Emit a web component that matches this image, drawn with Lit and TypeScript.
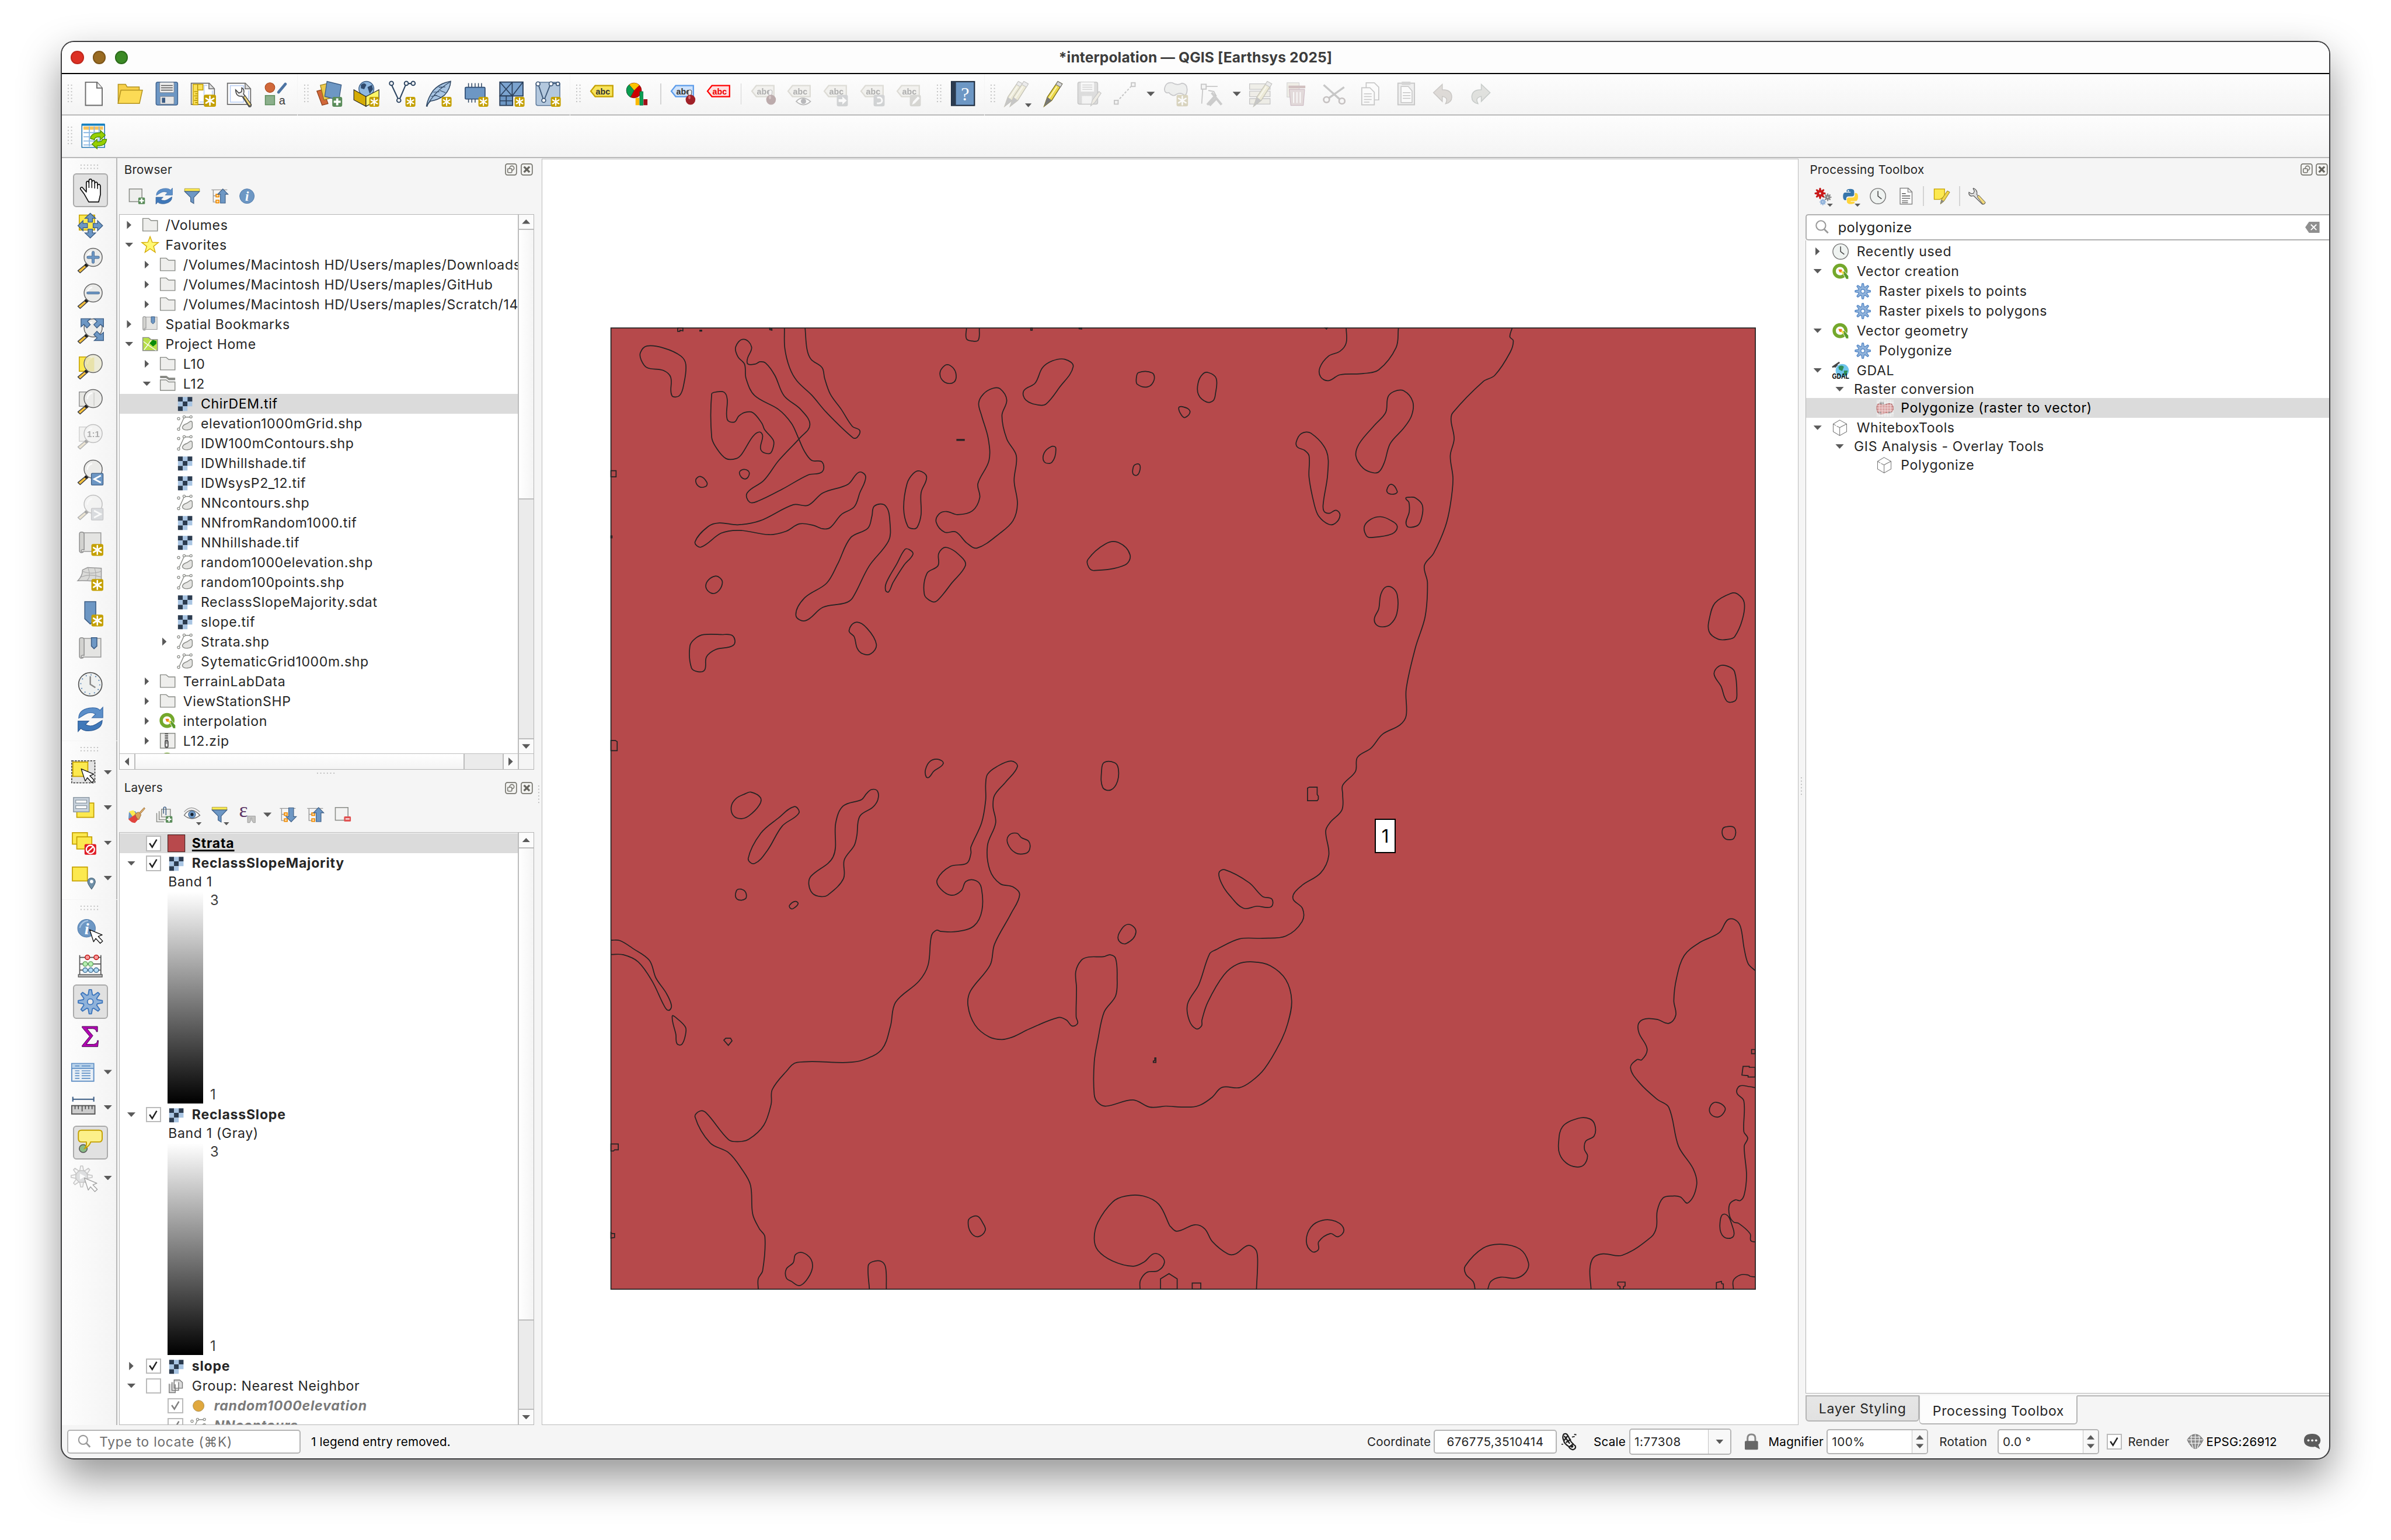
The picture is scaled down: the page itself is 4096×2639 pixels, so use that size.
import { LitElement, html, svg, css, nothing, type TemplateResult } from "lit";
import { customElement } from "lit/decorators.js";
import { styleMap } from "lit/directives/style-map.js";

/* ---------- shared icon parts ---------- */

const newBadge = (x: number, y: number, s: number) => svg`
  <rect x=${x} y=${y} width=${s} height=${s} rx="1.6" fill="#c4a000"/>
  <g transform="translate(${x + s / 2} ${y + s / 2}) scale(${s / 10})" stroke="#fff" stroke-width="1.3" stroke-linecap="round">
    <path d="M0-3.6V3.6M-3.2-1.9L3.2 1.9M-3.2 1.9L3.2-1.9" fill="none"/></g>`;
const plusBadge = (x: number, y: number, s: number) => svg`
  <rect x=${x} y=${y} width=${s} height=${s} rx="1.6" fill="#5a8c5a"/>
  <path transform="translate(${x + s / 2} ${y + s / 2}) scale(${s / 10})" d="M0-3.5V3.5M-3.5 0H3.5" stroke="#fff" stroke-width="2.2"/>`;
const lens = (fill = "#ebebe9") => svg`
  <path d="M9.2 14.2l1.6 1.6-8 7.2-2-1.9z" fill="#fcc33c" stroke="#444" stroke-width=".8" stroke-linejoin="round"/>
  <circle cx="8.4" cy="16" r="1.5" fill="#222"/>
  <circle cx="14.6" cy="9" r="8.2" fill=${fill} stroke="#666" stroke-width=".8"/>
  <path d="M9.3 9.5q.2-4.6 4.4-5.6" fill="none" stroke="#fff" stroke-width="1.4" opacity=".8"/>`;
const cursor = (x: number, y: number) => svg`
  <path transform="translate(${x} ${y})" d="M0 0l3.6 11 2-3 4 4.4 2.2-2-4-4.2 3.6-1.4z" fill="#fff" stroke="#111" stroke-width=".7" stroke-linejoin="round"/>`;
const tag = (fill: string, stroke: string, ink = "#333") => svg`
  <path d="M5.6 4.6H21.6V14.6H5.6L1.6 9.6z" fill=${fill} stroke=${stroke} stroke-width="1.2"/>
  <text x="12.6" y="12.5" font-size="8" font-weight="700" font-family="Liberation Sans, sans-serif" text-anchor="middle" textLength="13" lengthAdjust="spacingAndGlyphs" fill=${ink}>abc</text>`;
const redPin = svg`<path d="M18.5 8.5q2 0 1.4 3l-.5 4h-2l-.6-4q-.3-3 1.7-3z" fill="#eee" stroke="#555" stroke-width=".6"/><ellipse cx="19" cy="17.4" rx="4.4" ry="4.6" fill="#a02128"/><ellipse cx="18" cy="15.4" rx="1" ry="1.6" fill="#d76b70"/>`;
const gearPath = (cx: number, cy: number, r: number, fill: string, stroke: string, hole = "#fff") => {
  let d = "";
  for (let i = 0; i < 32; i++) {
    const a = ((i - 0.5) / 32) * Math.PI * 2 - Math.PI / 16;
    const rr = i % 4 === 1 || i % 4 === 2 ? r : r * 0.6;
    d += `${i ? "L" : "M"}${(cx + rr * Math.cos(a)).toFixed(2)} ${(cy + rr * Math.sin(a)).toFixed(2)}`;
  }
  return svg`<path d="${d}z" fill=${fill} stroke=${stroke} stroke-width=${r * 0.09} stroke-linejoin="round"/>
    <circle cx=${cx} cy=${cy} r=${r * 0.24} fill=${hole} stroke=${stroke} stroke-width=${r * 0.09}/>`;
};
const fullPencil = svg`<path d="M2 23.5L5 15 14.5.8l4 2.2L9 18z" fill="#ecd94b" stroke="#7d6f1a" stroke-width=".7"/><path d="M14.5.8l4 2.2-1.6 3-4.2-2.4z" fill="#d5d5d5" stroke="#777" stroke-width=".6"/><path d="M2 23.5L5 15l4 3z" fill="#777"/><path d="M13.6 5.5L6.6 16" stroke="#fbf5b8" stroke-width="1"/>`;
const blueArrows = svg`
  <path d="M1.5 11Q1.5 3.5 11 1.8q7-1 9.8 2L23.4 1v9.5h-9.8l3.2-3.2Q12 4.5 7 7.6L1.5 11z" fill="#5c8fc9" stroke="#3a6ba8" stroke-width=".6"/>
  <path d="M22.8 13q0 7.5-9.5 9.2-7 1-9.8-2L.9 23v-9.5h9.8l-3.2 3.2q4.8 2.8 9.8-.3z" fill="#3f78b9" stroke="#2e5b94" stroke-width=".6"/>`;
const qLogo = svg`
  <circle cx="15" cy="15.5" r="10.6" fill="none" stroke="#74a82c" stroke-width="6"/>
  <path d="M19 17.5l3.5-2.5 8 9.5V30h-4.5z" fill="#5a9a2a" stroke="#fff" stroke-width="1"/>
  <path d="M12 12.5h6l2 6-6-1z" fill="#ef7d1a"/><path d="M16 15l3.6.5 3.2 4-3 1.6z" fill="#f2e24a"/>`;
const globeBall = svg`<circle cx="12" cy="7.6" r="6.8" fill="#8fb8e0" stroke="#3b5c84" stroke-width=".7"/><path d="M7 4q3-3 5 0l-2 4-3-1zM13 6l4-2 1 4-3 4z" fill="#2f4a6d"/>`;
const tableBody = svg`<rect x="1" y="4" width="20" height="16" fill="#eaf0f6" stroke="#5f8fc5" stroke-width="1"/><rect x="1.4" y="4.4" width="19.2" height="3.8" fill="#b8d2ea"/><path d="M1 8.4H21M4 6.2h4M10 6.2h8M4 10.6h4M10 10.6h8M4 12.8h4M10 12.8h8M4 15h4M10 15h8M4 17.4h4M10 17.4h8" stroke="#5f8fc5" stroke-width=".9"/>`;
const scroll = svg`<path d="M4.6 2.6H21.6V19.6H5" fill="#e4e4e2" stroke="#999" stroke-width=".8"/><path d="M2.2 19.5V3.6Q2.2 2 4.2 2T6.4 3.8V18q-1.8-.4-2.6.6-.3 1.6 2 1.6Q2.4 21.6 2.2 19z" fill="#d3d3d0" stroke="#8f8f8f" stroke-width=".8"/>`;

/* ---------- 24-unit toolbar icons ---------- */

const big: Record<string, unknown> = {
  newDoc: svg`<path d="M4.5 1.5H15L19.6 6.8V22.5H4.5z" fill="#fff" stroke="#6b6b6b" stroke-width="1"/><path d="M14.8 1.6V6.8H19.5" fill="#eee" stroke="#6b6b6b" stroke-width="1"/>`,
  open: svg`<path d="M1.3 20.5V3.5H8L9.4 5.8H20.4V9" fill="#f7d04a" stroke="#b3931f" stroke-width=".8"/><path d="M3.8 8.7H23.3L20.6 20.8H1.2z" fill="#fcdb55" stroke="#b3931f" stroke-width=".8"/>`,
  save: svg`<rect x="2.3" y="1.4" width="19.6" height="20.8" rx="1.6" fill="#6d97c4" stroke="#41648f" stroke-width=".8"/><rect x="5.6" y="1.6" width="13" height="9.4" rx=".8" fill="#eee" stroke="#77808c" stroke-width=".5"/><path d="M6.8 4.5h10.6M6.8 6.6h10.6M6.8 8.7h10.6" stroke="#555" stroke-width=".8"/><rect x="6" y="14.4" width="12.6" height="7" rx=".6" fill="#e6e6e6" stroke="#77808c" stroke-width=".5"/><rect x="7.6" y="15.6" width="3" height="4.6" fill="#3b5c84"/>`,
  newLayout: svg`<path d="M1.4 2.4H17.6L22.4 7.4V21.6H1.4z" fill="#fff" stroke="#6b6b6b" stroke-width=".9"/><path d="M17.4 2.6V7.6H22" fill="#ddd" stroke="#6b6b6b" stroke-width=".8"/><path d="M9 4.5h7M20.5 9v8M13 5v14.5H9" stroke="#b7ccf2" fill="none" stroke-width=".8"/><path d="M3 22V3.4H12V8.6H7.4V22z" fill="#fbe056" stroke="#c4a000" stroke-width=".8"/><path d="M7.2 3.6V8.6M4 10h3M5 12h2M4 14h3M5 16h2M4 18h3M5 20h2" stroke="#a88a00" stroke-width=".7"/>${newBadge(12.8, 12.8, 11)}`,
  layoutMgr: svg`<path d="M1.4 2.4H17.6L22.4 7.4V21.6H1.4z" fill="#fff" stroke="#6b6b6b" stroke-width=".9"/><path d="M17.4 2.6V7.6H22" fill="#ddd" stroke="#6b6b6b" stroke-width=".8"/><path d="M4 4.6h12v15H4zM20.6 9v8" stroke="#b7ccf2" fill="none" stroke-width=".8"/><path d="M8.8 8.4l3 3 2.4-1.2.2-3.6q3 1.6 1.6 5.6l7 9.6q.2 2.4-2 2l-6.4-9.6q-5.4 1-5.8-5.8z" fill="#eee" stroke="#444" stroke-width=".8"/><path d="M15.8 14.8l1.6-1 5.6 8-1.8 1.4z" fill="#f2d97a" stroke="#444" stroke-width=".6"/>`,
  style: svg`<circle cx="6.6" cy="6.4" r="4.4" fill="#d1683a" stroke="#a9491f" stroke-width=".6"/><path d="M20.6 3.2L14.4 10.6" stroke="#4d74a3" stroke-width="2.6" stroke-linecap="round"/><rect x="2.4" y="13.6" width="8.4" height="8.4" fill="#8cb08c" stroke="#5a8c5a" stroke-width=".8"/><text x="17.6" y="21.8" font-size="10.5" text-anchor="middle" font-family="Liberation Sans, sans-serif" fill="#3a3a3a">a</text>`,
  dataSource: svg`<path d="M.4 9.6L6 8l4.6 13-5.4 1.4z" fill="#d1683a" stroke="#8a3c17" stroke-width=".6"/><path d="M3.6 4.2l7.8-1.8 2 13.4-6.6 1.8z" fill="#ecc94b" stroke="#8c7310" stroke-width=".6"/><path d="M9.6.8L22.6 4l-2.2 14L7.6 14.4z" fill="#6d97c4" stroke="#3b5c84" stroke-width=".7"/>${plusBadge(14.4, 14.8, 9)}`,
  geoPackage: svg`${globeBall}<path d="M.6 8.4L11.6 14.6V23.4L.6 17.6z" fill="#d5ac05" stroke="#222" stroke-width=".6"/><path d="M23.4 8.4L11.6 14.6V23.4L23.4 17z" fill="#fcf567" stroke="#222" stroke-width=".6"/>${newBadge(14.6, 14.8, 9)}`,
  shape: svg`<path d="M2.2 4.4L8.4 17.6M9 17.6L14.6 4.4M17 2.7h4" stroke="#2f4763" stroke-width="1.1"/><g fill="#fff" stroke="#2f4763" stroke-width="1"><circle cx="1.9" cy="2.6" r="1.8"/><circle cx="15.4" cy="2.6" r="1.8"/><circle cx="21.6" cy="2.6" r="1.8"/><circle cx="8.6" cy="18" r="1.8"/></g>${newBadge(14.6, 14.8, 9)}`,
  spatialite: svg`<path d="M.8 23.2Q2 16 7 9 13 2.4 22.8.6 22.4 8 16.8 13.6 11 18 4.6 18.6 2 20.6 1.4 23.4z" fill="#a7c4e2" stroke="#2f4763" stroke-width=".8"/><path d="M1.4 22.8Q8 10 22 1.4M7 10.6l5.6-.4M5 14.4l5.6-1M12 6l6-.2M8 13l6 2.4M13 9l5 2" stroke="#2f4763" fill="none" stroke-width=".6"/>${newBadge(14.6, 14.8, 9)}`,
  memory: svg`<path d="M5.6 6V2.4M8.6 6V2.4M11.6 6V2.4M14.6 6V2.4M17.4 6V2.4M5.6 16v4M8.6 16v4M11.6 16v4" stroke="#2f4763" stroke-width=".8"/><rect x="2.6" y="6.2" width="18" height="10.6" rx=".8" fill="#6d97c4" stroke="#2f4c72" stroke-width=".9"/>${newBadge(14.6, 14.8, 9)}`,
  mesh: svg`<rect x="1.2" y="1.4" width="21" height="12.6" fill="#7ba3cf" stroke="#2b405c" stroke-width="1"/><path d="M1.4 1.6L12.4 14 12.4 1.4M12.4 1.6L1.4 14M12.4 14L22 1.6" fill="none" stroke="#2b405c" stroke-width=".9"/><rect x="1.2" y="14" width="11.6" height="8.6" fill="#6d97c4" stroke="#2b405c" stroke-width="1"/><path d="M7 14v8.6M1.2 18.4h11.6" stroke="#2b405c" stroke-width=".9"/>${newBadge(14.6, 14.8, 9)}`,
  virtual: svg`<rect x="1.2" y="1.6" width="21.6" height="21" rx="1.6" fill="#b3c8de" stroke="#5c7899" stroke-width=".8"/><path d="M3.4 4L8 17.6M8.6 17.6L14 4M16.4 2.6l4 0" stroke="#3d5878" stroke-width="1"/><g fill="#fff" stroke="#3d5878" stroke-width=".9"><circle cx="3" cy="3" r="1.8"/><circle cx="14.8" cy="3" r="1.8"/><circle cx="21" cy="3" r="1.6"/><circle cx="8.2" cy="18" r="1.8"/></g>${newBadge(14.6, 14.8, 9)}`,
  label: tag("#f7e35a", "#c4a000"),
  diagram: svg`<circle cx="8" cy="9" r="6.8" fill="#c00" stroke="#600" stroke-width=".4"/><path d="M8 9L3.6 3.8a6.8 6.8 0 0 1 9.2.4z" fill="#fcc400"/><path d="M8 9L3.6 3.8a6.8 6.8 0 0 0 1.2 11.2z" fill="#0a9e50" stroke="#064" stroke-width=".4"/><path d="M9.4 15.6h3.4v6.8H9.4z" fill="#fcb900"/><path d="M13.2 10h3v12.4h-3z" fill="#0a9e50" stroke="#064" stroke-width=".4"/><path d="M16.6 17h3.6v5.4h-3.6z" fill="#a01018"/>`,
  labelPin: svg`${tag("#cfe3fb", "#5b9bea")}${redPin}`,
  labelRed: tag("#fde0e0", "#f00", "#e00"),
  labelPin2: svg`${tag("#e9e6cf", "#b7ae80")}${redPin}`,
  labelEye: svg`${tag("#e9e6cf", "#b7ae80")}<path d="M9 19q5.4-6 13 0-6.4 6-13 0z" fill="#fff" stroke="#555" stroke-width=".9"/><circle cx="15.6" cy="18.8" r="2.4" fill="#556"/>`,
  labelMove: svg`${tag("#e9e6cf", "#b7ae80")}<rect x="13" y="13" width="10" height="10.4" rx="1.6" fill="#8f9aa6"/><path d="M14.6 17h3.4v-2.4l4 3.6-4 3.6v-2.4h-3.4z" fill="#fff"/>`,
  labelRot: svg`${tag("#e9e6cf", "#b7ae80")}<rect x="13" y="13" width="10" height="10.4" rx="1.6" fill="#8f9aa6"/><path d="M16 20.6q5 .6 4.6-3-.6-3-4.4-2" fill="none" stroke="#fff" stroke-width="1.5"/>`,
  labelEdit: svg`${tag("#e9e6cf", "#b7ae80")}<rect x="13" y="13" width="10" height="10.4" rx="1.6" fill="#a7a48a"/><path d="M15 22l1-3 4.4-4.6 1.6 1.6-4.4 4.6z" fill="#fff"/>`,
  help: svg`<rect x="1.6" y="1" width="20.8" height="21.6" fill="#6d97c4" stroke="#1c2a3c" stroke-width="1.1"/><rect x="1.6" y="1" width="4" height="21.6" fill="#2b3b50"/><text x="14" y="18" font-size="17" text-anchor="middle" font-family="Liberation Serif, serif" fill="#fff">?</text>`,
  pencils: svg`<g transform="translate(-1 0)">${fullPencil}</g><g transform="translate(4 0)">${fullPencil}</g>`,
  pencil: svg`<g transform="translate(2 0)">${fullPencil}</g>`,
  saveEdit: svg`<rect x="1.3" y="1.4" width="18" height="20" rx="1.6" fill="#b0b0b0" stroke="#777" stroke-width=".8"/><rect x="4" y="1.6" width="12" height="8.4" fill="#f4f4f4"/><path d="M5.4 4h9M5.4 6h9M5.4 8h9" stroke="#888" stroke-width=".7"/><rect x="5" y="14" width="9" height="7" fill="#eee"/><path d="M13 23l1.4-5 6-8 2 1.4-5.6 8.4z" fill="#e8d7a0" stroke="#777" stroke-width=".6"/>`,
  digitize: svg`<path d="M4 19L18 4" stroke="#777" stroke-width="1.1" stroke-dasharray="2 1.4"/><rect x="1.6" y="18" width="3.4" height="3.4" fill="#eee" stroke="#777"/><rect x="17" y="2" width="3.4" height="3.4" fill="#eee" stroke="#777"/>`,
  addPoly: svg`<path d="M2 8Q3 1 9 2q5 3 9 .4Q22.6 3 22.6 8T20 13.4q-3-3-7-1-3 3-7-1.4Q2.4 12 2 8z" fill="#d6e0d8" stroke="#778" stroke-width=".9"/>${newBadge(13, 13, 10.4)}`,
  vertex: svg`<path d="M4 5.4H17.4M4 6L3 21" stroke="#777" stroke-width=".9"/><rect x="2.6" y="3.4" width="4.4" height="4.4" fill="#eee" stroke="#777"/><path d="M8 22l8-9M12 11l9 11M10 22.6l6-6" stroke="#888" stroke-width="2.2"/><path d="M9 9l5 1 2 4" stroke="#777" fill="none"/>`,
  multiEdit: svg`<path d="M1.4 3h18.6v5H1.4zM1.4 9.6h18.6v5H1.4zM1.4 16.4h18.6v5H1.4z" fill="#e4dcb0" stroke="#777" stroke-width=".7"/><g transform="translate(3 0)">${fullPencil}</g>`,
  trash: svg`<rect x="2" y="2" width="11" height="13" fill="#e9dca8" stroke="#999" stroke-width=".6"/><path d="M4 8h14l-1.2 14.6H5.4z" fill="#e4a0a4" stroke="#b06" stroke-width=".4"/><path d="M3.4 4.6H18.6V7H3.4z" fill="#c55"/><path d="M8 10.4v10M11 10.4v10M14 10.4v10" stroke="#fff"/>`,
  cut: svg`<path d="M2.4 4L17 17M21 6L7 16" stroke="#777" stroke-width="1.8"/><circle cx="19" cy="18.6" r="2.6" fill="none" stroke="#866" stroke-width="1.4"/><circle cx="5" cy="17.4" r="2.6" fill="none" stroke="#866" stroke-width="1.4"/>`,
  copy: svg`<path d="M7.6 2H15l4 4V17.6H7.6z" fill="#fff" stroke="#777" stroke-width=".9"/><path d="M3.6 6.6H11l4 4V22H3.6z" fill="#fff" stroke="#777" stroke-width=".9"/><path d="M5.6 12h7M5.6 14.6h7M5.6 17.2h7M5.6 19.6h5" stroke="#777" stroke-width=".8"/>`,
  paste: svg`<rect x="3.6" y="2.4" width="15" height="19.6" fill="#ddd" stroke="#777" stroke-width="1"/><rect x="7" y="1" width="8" height="3" fill="#999"/><path d="M6.4 5.4H13l3.4 4V20H6.4z" fill="#fff" stroke="#777" stroke-width=".8"/><path d="M8 11h7M8 13.6h7M8 16.2h7" stroke="#777" stroke-width=".8"/>`,
  undo: svg`<path d="M3 11L11 3.4V8.4Q19.6 8.4 19.6 15 19.6 20 14 21 17 15.4 11 14.4V19z" fill="#c0a890" stroke="#876" stroke-width=".8"/>`,
  redo: svg`<path d="M21 11L13 3.4V8.4Q4.4 8.4 4.4 15 4.4 20 10 21 7 15.4 13 14.4V19z" fill="#b8bca8" stroke="#687" stroke-width=".8"/>`,
  csvRefresh: svg`<rect x="1.2" y="1.4" width="20.6" height="20.6" fill="#fff" stroke="#1e73b0" stroke-width=".8"/><path d="M1 1.4h21" stroke="#1580bf" stroke-width="2"/><rect x="2.6" y="3" width="17.8" height="3" fill="#f8c35a"/><path d="M2.6 8.6h17.8M2.6 12.4h17.8M2.6 16.2h17.8M2.6 19.8h17.8M8 3v18M12.4 3v18M16.8 3v18" stroke="#8db9e3" stroke-width="1"/><path d="M9 14Q9.4 8.6 18 8.8V6.6l4.4 4.2-4.4 4.4v-2.6q-5-.4-5.4 2.4z" fill="#98d000" stroke="#4b8c00" stroke-width=".7"/><path d="M23.6 14.6q-.4 6.4-8.6 6v2.6L10.4 19l4.6-4.4V17q4.6.2 5-2.4z" fill="#98d000" stroke="#4b8c00" stroke-width=".7"/>`,

  pan: svg`<path d="M6.8 13.4V5.2q0-1.6 1.2-1.6T9.2 5.2V3q.1-1.4 1.3-1.4T11.8 3v1.4q.2-1.4 1.4-1.4T14.4 4.6v1q.2-1.2 1.3-1.2T17 6V7.4q.2-1 1.2-1T19.6 8v7.6L18 22.4H9L5 15.4 1.4 10.6Q1.4 9 3 9z" transform="translate(1.6 .4)" fill="#fff" stroke="#111" stroke-width=".9" stroke-linejoin="round"/><path d="M10.8 5v5M13.4 4.6v5.6M16 5.6v5M18.6 7v4" stroke="#111" stroke-width=".8"/>`,
  panSel: svg`<rect x="2" y="2.4" width="14" height="13.6" fill="#fce94f" stroke="#c4a000" stroke-width=".8"/><g fill="#6d97c4" stroke="#3b5c84" stroke-width=".7"><path d="M12 .8l4.8 4.6H14v3.4h-4V5.4H7.2z"/><path d="M12 23.2l4.8-4.6H14v-3.4h-4v3.4H7.2z"/><path d="M.8 12l4.6-4.6V10h4v4h-4v2.6z"/><path d="M23.2 12l-4.6-4.6V10h-4v4h4v2.6z"/></g>`,
  zoomIn: svg`${lens()}<path d="M14.6 4.6v8.8M10 9h9.2" stroke="#3b5c84" stroke-width="2.6" stroke-linecap="round"/><path d="M14.6 4.6v8.8M10 9h9.2" stroke="#6d97c4" stroke-width="1.9" stroke-linecap="round"/>`,
  zoomOut: svg`${lens()}<path d="M9.8 9h9.6" stroke="#3b5c84" stroke-width="2.4" stroke-linecap="round"/><path d="M9.8 9h9.6" stroke="#6d97c4" stroke-width="1.7" stroke-linecap="round"/>`,
  zoomFull: svg`${lens()}<g fill="#6d97c4" stroke="#3b5c84" stroke-width=".7"><path d="M3.6.6H12L9.4 3 12 6 9 9 6.2 5.8 3.6 8z"/><path d="M24 .6h-8.4l2.6 2.4-3 3L18 9l3.2-3.2L24 8z"/><path d="M24 20.4h-8.4l2.6-2.4-3-3L18 12l3.2 3.2L24 13z"/></g>`,
  zoomSel: svg`<rect x="2" y="3" width="13" height="13" fill="#fce94f" stroke="#c4a000" stroke-width=".8"/>${lens("#ecebd8")}<path d="M8 3.6h7.6v12.4H11Q6 12 8 3.6z" fill="#e6dc8c" opacity=".6"/>`,
  zoomLayer: svg`<rect x="2" y="3" width="13" height="13" fill="#e6e6e2" stroke="#888" stroke-width=".7"/>${lens()}<path d="M15.4 3.6v12" stroke="#c8c8c4" stroke-width=".7"/>`,
  zoomNative: svg`<rect x="2" y="3" width="13" height="13" fill="#e6e6e2" stroke="#888" stroke-width=".7"/>${lens()}<text x="14.8" y="12" font-size="8" font-weight="700" text-anchor="middle" font-family="Liberation Sans, sans-serif" fill="#333">1:1</text>`,
  zoomLast: svg`${lens()}<rect x="13" y="12.8" width="10.6" height="10.6" rx=".8" fill="#6d97c4" stroke="#3b5c84" stroke-width=".7"/><path d="M21.6 14.8l-6 3.2 6 3.2" fill="none" stroke="#fff" stroke-width="1.5"/>`,
  zoomNext: svg`${lens()}<rect x="13" y="12.8" width="10.6" height="10.6" rx=".8" fill="#9fb2c6" stroke="#778" stroke-width=".7"/><path d="M15.4 14.8l6 3.2-6 3.2" fill="none" stroke="#fff" stroke-width="1.5"/>`,
  newMap: svg`${scroll}${newBadge(13, 12.8, 10.8)}`,
  new3d: svg`<path d="M.6 14.4Q5 10 5 4.6L9.6 2.4 22 3V16q-8-2-21.4-1.6z" fill="#dadad8" stroke="#999" stroke-width=".8"/><path d="M5 6q8 3 16.8 0M3.6 11q8-3.4 18 0M10 3q3 8-1 11M16 3q2 7 0 12" fill="none" stroke="#aaa" stroke-width=".6"/>${newBadge(13, 12.8, 10.8)}`,
  newBook: svg`<path d="M7 1h10v15.6l-5 4.8-5-4.8z" fill="#6d97c4" stroke="#3b5c84" stroke-width=".8"/>${newBadge(13, 12.8, 10.8)}`,
  books: svg`${scroll}<path d="M13 2h5v7.6L15.4 12 13 9.6z" fill="#6d97c4" stroke="#3b5c84" stroke-width=".8"/>`,
  clock: svg`<circle cx="12" cy="12" r="10.6" fill="#eff1f0" stroke="#555" stroke-width=".9"/><circle cx="12" cy="12" r="8.6" fill="none" stroke="#5a87b8" stroke-width="1" stroke-dasharray="1 3.5"/><path d="M12 4.6V12l4.6 3" fill="none" stroke="#888" stroke-width="1.3"/>`,
  refresh: blueArrows,
  select: svg`<rect x="1" y="1.4" width="21" height="20" fill="#e3e3e3" stroke="#333" stroke-width=".8" stroke-dasharray="1.8 1"/><rect x="2" y="2.6" width="13.6" height="13" fill="#fce94f" stroke="#c4a000" stroke-width=".9"/>${cursor(9.6, 8.8)}`,
  selForm: svg`<rect x="5.6" y="8" width="15.4" height="13" fill="#fce94f" stroke="#c4a000" stroke-width=".9"/><rect x="2.6" y="3" width="14.2" height="13" fill="#c9d3dd" stroke="#8a97a3" stroke-width=".8"/><path d="M4.6 5.4h10v2.6h-10zM4.6 10.4h10V13h-10z" fill="#fff" stroke="#8a97a3" stroke-width=".7"/>`,
  deselect: svg`<rect x="1.6" y="2.6" width="13.6" height="10.4" fill="#fce94f" stroke="#c4a000" stroke-width=".9"/><rect x="5.6" y="6.4" width="13.6" height="11" fill="#fce94f" stroke="#c4a000" stroke-width=".9"/><rect x="12.6" y="13" width="10.6" height="9.6" rx="1.2" fill="#e01b24"/><circle cx="17.9" cy="17.8" r="3.7" fill="#e01b24" stroke="#fff" stroke-width="1.2"/><path d="M15.4 20.2l5-4.8" stroke="#fff" stroke-width="1.2"/>`,
  selLoc: svg`<rect x="1.6" y="2" width="13.6" height="12.6" fill="#fce94f" stroke="#c4a000" stroke-width=".9"/><path d="M19 22Q15.4 17.4 15.4 15.4a3.5 3.5 0 0 1 7 0Q22.4 17.4 19 22z" fill="#6f90a8" stroke="#4a6579" stroke-width=".6"/><circle cx="19" cy="15.2" r="1.5" fill="#fff"/>`,
  identify: svg`<circle cx="8.6" cy="9.4" r="8" fill="#6d97c4" stroke="#5580b0" stroke-width=".6"/><path d="M2.4 9Q4 3 10 2.4" fill="none" stroke="#a9c5e3" stroke-width="1.2"/><text x="8.8" y="14.8" font-size="15" font-style="italic" font-weight="700" text-anchor="middle" font-family="Liberation Serif, serif" fill="#fff">i</text>${cursor(11.4, 10.6)}`,
  abacus: svg`<path d="M2.4 2V20M21.6 2V20M2.4 4H21.6M2.4 10H21.6M2.4 15.6H21.6" stroke="#555" stroke-width=".9" fill="none"/><rect x="1.2" y="19.6" width="21.6" height="2.2" fill="#bbb" stroke="#555" stroke-width=".7"/><g stroke-width=".7"><g fill="#f79a9a" stroke="#b00"><circle cx="9.4" cy="4" r="2.1"/><circle cx="17.4" cy="4" r="2.1"/></g><g fill="#b5efb0" stroke="#5a9e5a"><circle cx="7.4" cy="10" r="2.1"/><circle cx="12.4" cy="10" r="2.1"/></g><g fill="#b5dcf5" stroke="#3b6a90"><circle cx="7.4" cy="15.6" r="2.1"/><circle cx="12.4" cy="15.6" r="2.1"/><circle cx="17.4" cy="15.6" r="2.1"/></g></g>`,
  gear: gearPath(12, 12, 11, "#8fb2da", "#3d76bd", "#e8e8e8"),
  sigma: svg`<path d="M4.6 2.6H18.6V7.4H17.6Q17 4.6 14 4.6H9L14.4 11 8.4 18.8H15Q18.4 18.4 18.4 15.4H19.4L18.8 21H4.6V20L11.4 11.6 4.6 3.6z" fill="#b107b1" stroke="#3f0c4a" stroke-width=".5"/>`,
  table: tableBody,
  measure: svg`<path d="M2 4.6H21M2 2.4v4.4M21 2.4v4.4" stroke="#3b5c84" stroke-width="1.1"/><rect x="1" y="10.4" width="21" height="7.6" fill="#ccc" stroke="#555" stroke-width="1"/><path d="M4 10.6v3M7 10.6v3M10.4 10.6v5M13.4 10.6v3M16.4 10.6v3M19.4 10.6v3" stroke="#444" stroke-width=".8"/>`,
  tips: svg`<circle cx="5.6" cy="17.6" r="3.6" fill="#8abb86" stroke="#555" stroke-width=".8"/><path d="M4 .9H20q2.8 0 2.8 2.8V8.6q0 3-2.8 3H12.4Q11 15.6 7 17.4q2-3 1.4-5.8H4q-2.8 0-2.8-3V3.7Q1.2.9 4 .9z" fill="#fcf08a" stroke="#c4a000" stroke-width="1"/>`,
  action: svg`<g>${gearPath(10, 10.6, 9.6, "#f4f4f4", "#777", "#fff")}</g><circle cx="10" cy="10.6" r="5.4" fill="#aeb6bd" stroke="#777" stroke-width=".8"/><path d="M8.4 8l5 2.6-5 2.8z" fill="#fff"/>${cursor(12.4, 12)}`,
};

/* ---------- 32-unit panel icons ---------- */

const folderShape = svg`<path d="M2.8 4.6H13.4L18 8.4H29.4V27.4H2.8z" fill="#eeeeec" stroke="#888a85" stroke-width="1.5"/>`;
const gearSmall = gearPath(16, 16, 14, "#8fb2da", "#4a80c4");
const clockSmall = svg`<circle cx="16" cy="16" r="14" fill="#eff3f1" stroke="#777" stroke-width="1.5"/><path d="M16 6.6V16l6.6 5" fill="none" stroke="#444" stroke-width="1.6"/>`;
const boxSmall = svg`<path d="M13.4 2L26 9v14l-12.6 7L1.6 23V9zM1.6 9l5 3M26 9l-10 5M13.4 15.6V30M8 13l5.4 2.6 3-1.6" fill="#fff" stroke="#777" stroke-width="1.1" transform="translate(1 0)"/>`;
const treeUpDown = (down: boolean) => svg`
  <path d="M1.4 4.6H30M4.6 5V26.6H12M4.6 15.4H12" fill="none" stroke="#999" stroke-width="1.5"/>
  <rect x="9.6" y="12.6" width="5.4" height="4.8" fill="#ffd9a0" stroke="#ef8a00" stroke-width="1.7"/><rect x="9.6" y="23.4" width="5.4" height="4.8" fill="#ffd9a0" stroke="#ef8a00" stroke-width="1.7"/>
  <path transform=${down ? "rotate(180 22 16)" : ""} d="M22 3l9.4 9.6h-5V28.6h-8.8V12.6h-5z" fill="#6d97c4" stroke="#3b5c84" stroke-width="1.2"/>`;
const funnel = svg`<path d="M2.4 2.4H29.4V7H2.4z" fill="#fce94f" stroke="#9a8a20" stroke-width=".8"/><path d="M2.4 7.4H29.4L19 18.4V29.4L13.4 26V18.4z" fill="#6d97c4" stroke="#3b5c84" stroke-width="1.2"/>`;

const small: Record<string, unknown> = {
  folder: folderShape,
  folderOpen: svg`<path d="M2.4 2H14l4.6 3.6H29.8V10H18L13.4 6.4H2.4z" fill="#888a85"/><path d="M2.8 9.6H13.4L18 13.2H29.4V28.6H2.8z" fill="#eeeeec" stroke="#888a85" stroke-width="1.5"/>`,
  star: svg`<path d="M16 1.6l4 10.2 11 .6-8.6 6.8L25.4 30 16 23.6 6.8 30l3-10.8L1 12.4l11-.6z" fill="#fff873" stroke="#d5ac05" stroke-width="1.5"/>`,
  bookmark: svg`<g transform="scale(1.33)">${scroll}</g><path d="M18 3h6.4v10L21.2 16 18 13z" fill="#6d97c4" stroke="#3b5c84" stroke-width="1"/>`,
  home: svg`<path d="M2.8 4.6H13.4L18 8.4H29.4V28.4H2.8z" fill="#b8df4a" stroke="#888a85" stroke-width="1.5"/><path d="M4 12l8 6 15 10M12 18l-7 9M12 18L18 9" stroke="#fff" stroke-width="1.4" fill="none"/><path d="M15 15l6-6 6.4 2v5l-6 5z" fill="#098a09"/>`,
  raster: svg`<path d="M3 4.4h8.7v8.4H3zM20.3 4.4H29v8.4h-8.7zM11.7 12.8h8.6v8.7h-8.6zM3 21.5h8.7V30H3z" fill="#2b3b4f"/><path d="M11.7 4.4h8.6v8.4h-8.6zM3 12.8h8.7v8.7H3zM20.3 12.8H29v8.7h-8.7zM11.7 21.5h8.6V30h-8.6z" fill="#a9c5e3"/>`,
  vector: svg`<path d="M5 26L14 6M16 5h10" stroke="#888a85" stroke-width="1.5"/><g fill="#fff" stroke="#888a85" stroke-width="1.3"><circle cx="4.2" cy="8" r="2.2"/><circle cx="14.2" cy="4.6" r="2.2"/><circle cx="26.6" cy="4.6" r="2.2"/><circle cx="4.2" cy="27" r="2.2"/></g><path d="M11 24q1-5 8-7l7-4.6q3-.4 3 4v7q-2 5-9 5-8 .4-9-4.4z" fill="#e4e4e2" stroke="#888a85" stroke-width="1.5"/>`,
  qgis: qLogo,
  zip: svg`<rect x="2.8" y="2.8" width="26.6" height="26.8" fill="#eeeeec" stroke="#888a85" stroke-width="1.6"/><path d="M14 3v14" stroke="#444" stroke-width="6" stroke-dasharray="1.6 1.4"/><rect x="11.4" y="16" width="5.6" height="12.6" rx="2.6" fill="#999" stroke="#444" stroke-width="1.4"/><rect x="13" y="22" width="2.4" height="4" fill="#fff"/>`,
  addLayer: svg`<rect x="2.6" y="3" width="23" height="23" fill="#eeeeec" stroke="#888a85" stroke-width="1.6"/>${plusBadge(19, 18.4, 12)}`,
  refresh: svg`<g transform="scale(1.33)">${blueArrows}</g>`,
  filter: funnel,
  collapse: treeUpDown(false),
  expand: treeUpDown(true),
  info: svg`<circle cx="16" cy="16" r="13.2" fill="#6d97c4" stroke="#4a76a8" stroke-width="1"/><text x="16" y="24.6" font-size="24" font-style="italic" font-weight="700" text-anchor="middle" font-family="Liberation Serif, serif" fill="#fff">i</text>`,
  brush: svg`<path d="M2 12q6-4 12-2l6 8-7 8q-8 1-12-2z" fill="#6d97c4"/><path d="M2 10l8-2 8 10-6 6z" fill="#fce94f"/><path d="M1 24l12-8 8 6-8 9q-7-.4-12-7z" fill="#e0443e"/><path d="M13 15l6-4 5 5-4 9q-4-1-7-10z" fill="#d9a35a" stroke="#8f5f22" stroke-width=".9"/><path d="M21 12L29.6 3l1.6 1.8-8 9.2z" fill="#e0b070" stroke="#8f5f22" stroke-width=".9"/>`,
  addGroup: svg`<path d="M2.6 13V29H16M7 9.6V25H20M11.4 6H27.4V20H11.4z" fill="#eeeeec" stroke="#888a85" stroke-width="1.5"/><path d="M15 14V4.6q0-2.6 2.2-2.6t2.2 2.6V17" fill="none" stroke="#3b5c84" stroke-width="1.5"/>${plusBadge(19, 18.4, 12)}`,
  eye: svg`<path d="M1.6 17Q14-1 30 17 15 29 1.6 17z" fill="#fff" stroke="#777" stroke-width="1.6"/><path d="M1.6 11Q14-4 30 11" fill="none" stroke="#999" stroke-width="1.3"/><circle cx="15.8" cy="15.6" r="6.6" fill="#6d97c4" stroke="#3b5c84"/><circle cx="15.8" cy="15.6" r="2.8" fill="#16202c"/>`,
  epsilon: svg`<text x="9.6" y="19.6" font-size="38" text-anchor="middle" font-family="Liberation Serif, serif" fill="#5c3566">ε</text><path d="M17 18.4H31V30.4H27.4L24.6 26V22H23v4l-2 4.4H17z" fill="#c4c4c2" stroke="#999" stroke-width="1"/>`,
  remove: svg`<rect x="2.6" y="3" width="23" height="23" fill="#f3f3f2" stroke="#888a85" stroke-width="1.6"/><rect x="18.4" y="19" width="12.4" height="9.4" rx="1.6" fill="#e05050"/><path d="M21 23.7h7.4" stroke="#fff" stroke-width="2"/>`,
  group: svg`<path d="M3 12V28H14V13M8 9V24h12V9M12 5H22L27 9.6V20H12z" fill="#ddd" stroke="#777" stroke-width="1.5"/>`,
  gears: svg`${gearPath(10.6, 11, 9.6, "#d01818", "#b00a0a", "#f5f5f5")}${gearPath(24.4, 18, 6.6, "#888", "#777", "#f5f5f5")}${gearPath(15.6, 26.6, 5.6, "#8fb2da", "#6f9ad0", "#f5f5f5")}`,
  python: svg`<path d="M15.6 3q7 0 7 4.4v5.4q0 3.6-4 3.6h-6q-4.4 0-4.4 4.4v2.6H6q-3.6-.4-3.6-7T6 9.4h10V8.2H8.8V6.4Q9 3 15.6 3z" fill="#3776ab"/><path d="M16.4 30.4q-7 0-7-4.4v-4q0-3.6 4-3.6h6q4.4 0 4.4-4.4v-3.6H26q3.6.4 3.6 7T26 25h-9.6v1.2h7v1.4q-.4 2.8-7 2.8z" fill="#ffd43b"/><circle cx="12" cy="6.4" r="1.3" fill="#fff"/>`,
  clock: clockSmall,
  doc: svg`<path d="M5.4 1.6H20L27 8.4V30.4H5.4z" fill="#fff" stroke="#888" stroke-width="1.6"/><path d="M19.6 1.6V8.6H26.6" fill="none" stroke="#888" stroke-width="1.5"/><path d="M8.6 11.4h7M8.6 15.6h15M8.6 20h15M8.6 24.4h11M8.6 28h11" stroke="#555" stroke-width="1.4"/>`,
  note: svg`<path d="M2.6 3H21.4V17L13 21.8H2.6z" fill="#fce94f" stroke="#c4a000" stroke-width="1.4"/><path d="M14 30.4l1.6-8L26.4 6.4l4.4 2.4L20.4 25z" fill="#f0d54a" stroke="#8a7a1a" stroke-width="1"/><path d="M14 30.4l1.6-8 4.8 2.6z" fill="#888"/>`,
  wrench: svg`<path d="M1 9q-1 5 4 7l4.6-.6L25 30.4q4 1 5.4-2L15.4 13q1.6-8-6-11.4l-.8.8L11 7 9 11l-4 .4z" fill="#ddd" stroke="#555" stroke-width="1.2"/><path d="M16 17l3-2.6L30.6 27q0 3.4-4.4 3.6z" fill="#f2d97a" stroke="#555" stroke-width="1"/>`,
  gear: gearSmall,
  gdal: svg`<circle cx="19" cy="16" r="12" fill="#6fc5ec"/><path d="M12 9q6-4 10 0l-3 8-6-3zM22 16l7 0-3 9-4-2z" fill="#2f8f5a"/><path d="M1 10L14 1M5 10l5-5" stroke="#444" stroke-width="3"/><text x="16" y="31" font-size="13.5" font-weight="700" textLength="31" lengthAdjust="spacingAndGlyphs" text-anchor="middle" font-family="Liberation Sans, sans-serif" fill="#000">GDAL</text>`,
  polygonize: svg`<path d="M1 1h31v31H1z" fill="#e6e6e6"/><path d="M2 11q1-3 6-2 4 3 9 1 6-3 11-1 3 3 3 8t-5 7-6 1-7 1q-8 2-10-2-3-7-1-13z" fill="#dba5a5" stroke="#b56a6a" stroke-width="1.4"/><path d="M6 5h8v4H6zM4 23h5v3H4zM22 23h5v3h-5z" fill="#999"/><path d="M6 1v31M11 1v31M16 1v31M21 1v31M26 1v31M1 6h31M1 11h31M1 16h31M1 21h31M1 26h31" stroke="#fff" stroke-width=".8" opacity=".7"/>`,
  box: boxSmall,
  dot: svg`<circle cx="16" cy="16" r="10" fill="#e0a83e" stroke="#a88a4a" stroke-width="1"/>`,
  swatch: svg`<rect x=".6" y=".6" width="30.8" height="30.8" fill="#b8494c" stroke="#4a2020" stroke-width="1.2"/>`,
};

const icon24 = (name: string, off = false) =>
  html`<svg class="i48 ${off ? "off" : ""}" viewBox="0 0 24 24">${big[name]}</svg>`;
const icon32 = (name: string, off = false) =>
  html`<svg class="i32 ${off ? "off" : ""}" viewBox="0 0 32 32">${small[name]}</svg>`;

/* ---------- map geometry: c = closed curve, o = open curve, p = closed polygon ---------- */

interface Sheet { x: number; y: number; sx: number; sy: number; lines: string[] }
const sheets: Sheet[] = [
  {
    x: 1090, y: 580, sx: 0.66964, sy: 0.56122, lines: [
      "p 207 27 207 38 213 38 213 34 221 36 221 27", "p 267 34 272 34 272 37 267 37", "p 456 27 456 32 462 34 462 30",
      "p 1163 27 1167 27 1167 34 1163 34", "p 1294 27 1301 27 1301 30 1294 29", "p 963 387 983 387 983 390 963 390", "p 26 699 29 699 29 705 26 705",
      "c 106 106 124 85 170 92 215 117 229 145 224 205 212 245 191 245 188 186 168 164 124 155 108 130",
      "c 364 88 385 63 407 88 396 125 397 143 418 143 430 136 445 140 470 180 495 246 540 290 565 340 538 382 480 456 440 520 395 560 402 590 425 586 490 548 560 502 598 492 598 460 570 455 550 425 533 380 515 335 480 290 415 245 392 190 388 144 370 120",
      "o 496 27 497 92 510 155 530 198 570 244 610 300 682 382 693 380 700 358 680 345 650 290 620 240 605 190 598 155 568 128 557 95 552 27",
      "c 299 240 310 234 332 234 341 256 341 322 360 331 372 312 388 300 410 300 435 335 442 355 466 390 465 415 455 433 432 420 437 375 428 363 410 378 380 435 365 449 338 449 312 415 299 380",
      "c 374 495 387 484 401 495 389 515", "c 256 518 269 507 286 526 283 539 264 539",
      "c 254 718 290 668 320 657 370 663 430 650 520 598 560 600 600 560 668 532 698 493 716 508 700 560 685 605 650 630 620 672 600 676 575 665 537 660 500 684 455 695 375 681 325 690 270 735",
      "c 740 602 770 602 782 660 778 715 725 797 680 900 660 916 600 930 553 973 527 955 550 900 610 852 640 790 675 705 722 674 733 635",
      "c 862 489 881 508 866 560 866 630 856 670 845 676 830 668 819 610 828 530 845 497",
      "c 822 743 834 743 844 758 820 793 790 850 778 880 770 875 772 850 800 790",
      "c 1022 270 1035 240 1060 222 1080 223 1098 260 1085 310 1098 385 1124 440 1118 520 1127 595 1115 650 1080 690 1018 738 990 722 960 686 930 687 907 655 915 628 935 620 965 630 1005 618 1025 575 1020 530 1050 455 1048 385 1030 310",
      "c 934 736 975 767 986 795 950 850 910 908 895 911 875 888 882 820 912 795 914 755",
      "c 930 148 945 148 960 172 955 202 930 202 917 175",
      "c 1222 133 1255 128 1278 152 1240 220 1205 272 1185 276 1150 260 1144 230 1175 205 1195 155",
      "c 1455 171 1492 172 1497 195 1480 217 1452 209 1449 190", "c 1219 410 1231 415 1221 460 1200 460 1199 432",
      "c 1445 469 1458 469 1458 490 1450 503 1440 498 1440 480", "o 989 27 989 62 1005 69 1021 66 1024 27",
      "c 1318 775 1365 725 1400 720 1432 760 1418 793 1335 811 1320 800", "c 283 860 308 829 328 850 305 885",
      "c 690 978 720 998 745 1050 730 1080 708 1080 693 1062 685 1025 671 1005",
      "c 278 1018 325 1018 356 1022 358 1052 310 1066 285 1090 280 1132 262 1138 244 1125 240 1055 255 1030",
      "p 26 488 40 488 40 508 26 508", "p 26 1360 38 1360 43 1364 43 1393 26 1393",
      "c 878 1455 890 1428 912 1421 926 1435 900 1460 888 1479 880 1478",
      "c 1362 1431 1390 1432 1400 1450 1398 1492 1380 1520 1358 1512 1355 1455",
    ],
  },
  {
    x: 2100, y: 580, sx: 0.70153, sy: 0.56122, lines: [
      "p 432 27 437 27 435 30", "o 486 27 486 75 470 102 440 118 418 155 420 185 440 197 470 178 530 174 570 162 615 90 621 27",
      "c 103 205 115 176 130 171 150 190 148 240 142 262 125 266 104 242", "c 53 285 62 281 82 295 70 316 60 308",
      "c 594 250 610 232 635 230 658 265 655 310 635 350 600 400 585 460 572 490 557 495 530 480 511 440 520 400 560 340 588 300",
      "c 357 395 370 368 395 367 435 425 438 500 427 590 428 618 442 626 460 616 470 632 458 658 440 661 415 635 404 600 390 510 390 440 378 422 360 412",
      "c 603 532 618 555 612 563 596 562 591 550", "c 640 577 650 574 665 576 683 600 680 645 668 667 642 665 649 620 648 590",
      "c 533 668 550 645 575 637 600 648 618 668 605 692 550 704 538 698",
      "c 559 965 570 935 575 890 587 865 604 865 618 890 617 950 600 985 580 993 563 985",
      "c 1440 915 1480 885 1498 887 1515 915 1510 970 1490 1025 1475 1033 1448 1033 1424 1008 1426 960",
      "c 1437 1145 1450 1120 1472 1120 1490 1138 1496 1215 1490 1233 1470 1233 1455 1185",
      "p 386 1514 391 1511 411 1511 411 1535 414 1540 414 1550 411 1555 386 1555",
      "o 477 1534 477 1505 510 1460 515 1415 550 1385 580 1340 625 1310 641 1280 641 1195 665 1060 690 960 696 850 688 795 712 755 742 670 755 600 762 515 755 440 765 385 757 325 762 300 840 200 870 180 910 105 918 68 909 55 915 27",
    ],
  },
  {
    x: 1090, y: 1440, sx: 0.66964, sy: 0.58673, lines: [
      "c 352 40 365 15 390 0 405 -5 431 12 428 35 400 68 378 77 358 68", "c 522 40 535 60 490 100 450 175 415 216 398 200 432 122 480 75",
      "c 718 0 732 -13 748 -8 749 18 735 42 700 70 692 130 685 160 658 205 656 262 615 312 595 318 572 308 562 280 568 255 628 195 635 90 655 38 705 18",
      "c 366 300 378 295 391 305 390 325 367 325", "c 510 345 525 333 533 340 520 355 512 354",
      "c 1103 130 1125 122 1138 136 1158 148 1160 172 1148 185 1122 183 1101 155", "c 1427 404 1448 428 1422 463 1402 455 1403 430",
      "o 26 453 50 454 85 478 130 515 148 570 175 615 190 655 182 670 170 655 138 580 100 520 60 498 26 497",
      "c 192 688 205 695 228 722 228 745 218 775 205 773 202 745", "p 332 762 337 756 350 756 354 764 344 778",
      "o 425 1532 425 1500 437 1475 443 1370 428 1345 410 1300 404 1210 380 1160 345 1110 295 1080 254 1000 268 981 285 988 345 1070 370 1076 400 1068 440 1025 460 960 463 915 500 860 530 831 665 831 710 823 760 790 783 720 797 645 860 580 885 530 894 440 908 422 920 426 965 426 1010 408 1031 360 1029 290 1015 269 988 271 975 300 948 314 918 293 910 265 945 225 990 215 1001 185 1001 165 1030 90 1041 20 1041 -30 1046 -60 1070 -83 1110 -101 1127 -84 1095 -36 1065 5 1061 40 1068 90 1046 160 1052 235 1080 278 1115 288 1133 312 1110 370 1065 465 1053 530 1000 610 993 655 1012 715 1050 752 1085 760 1115 752 1160 727 1238 692 1260 700 1275 718 1290 710 1286 690 1287 600 1285 550 1300 515 1320 505 1360 504 1378 498 1393 510 1397 570 1393 625 1362 675 1345 760 1335 830 1335 930 1345 955 1367 966 1440 947 1485 969 1529 966",
      "p 1499 817 1502 817 1502 831 1495 831 1495 827 1499 825", "p 26 1083 46 1083 46 1101 36 1101 33 1105 26 1105",
      "p 26 1357 30 1360 36 1360 36 1372 26 1374", "c 994 1320 1005 1308 1020 1307 1032 1325 1040 1350 1020 1370 1000 1355",
      "c 501 1470 520 1450 526 1425 545 1419 568 1440 571 1470 555 1505 536 1521 515 1508 501 1497",
      "o 726 1532 723 1460 735 1447 758 1446 770 1465 772 1532",
      "o 1459 1532 1460 1505 1478 1480 1508 1475 1525 1450 1515 1428 1495 1423 1470 1448 1440 1461 1385 1445 1345 1412 1335 1375 1345 1325 1385 1262 1420 1244 1468 1244 1510 1270 1539 1335",
    ],
  },
  {
    x: 2100, y: 1440, sx: 0.70153, sy: 0.58673, lines: [
      "o 20 966 85 969 110 962 140 938 165 908 210 909 240 890 275 850 315 770 335 710 345 640 330 575 290 532 245 520 205 527 170 560 128 645 113 700 112 718 98 727 80 700 76 650 105 590 133 495 150 482 210 449 270 447 330 440 372 395 373 355 348 322 370 285 420 245 441 190 433 115 445 88 475 50 477 0",
      "o 29 1335 48 1353 95 1333 120 1345 140 1385 180 1423 200 1423 232 1397 252 1410 257 1440 254 1532",
      "p 6 1532 6 1500 28 1484 49 1500 49 1532", "p 88 1532 88 1513 110 1513 110 1532",
      "c 157 245 172 235 235 275 270 318 294 326 291 350 255 348 220 354 185 315 165 280",
      "c 383 1385 395 1340 425 1319 460 1323 480 1348 465 1370 445 1360 415 1385 414 1410 398 1416",
      "o 819 1532 815 1510 795 1485 794 1460 840 1405 885 1393 935 1408 957 1450 950 1480 925 1498 885 1495 860 1508 852 1532",
      "c 1035 1080 1045 1030 1085 1004 1115 1005 1129 1025 1127 1058 1105 1075 1102 1100 1110 1120 1100 1148 1080 1154 1055 1142 1038 1115",
      "c 1459 110 1466 103 1487 103 1493 120 1488 138 1480 142 1467 140 1459 128",
      "o 1543 547 1525 525 1515 480 1505 410 1490 389 1472 390 1450 430 1400 460 1360 500 1340 570 1333 640 1338 685 1320 710 1290 698 1260 696 1242 710 1243 740 1264 790 1250 823 1238 822 1221 848 1245 895 1290 945 1320 970 1345 1090 1383 1160 1392 1210 1370 1265 1350 1247 1330 1244 1305 1250 1290 1290 1288 1340 1275 1370 1200 1427 1150 1423 1125 1435 1116 1470 1119 1532",
      "p 1543 791 1534 791 1534 804 1543 804", "p 1543 846 1528 846 1528 843 1512 843 1509 870 1525 872 1525 876 1543 876",
      "o 1543 909 1530 906 1503 904 1496 925 1514 950 1514 1045 1524 1065 1515 1090 1521 1180 1515 1240 1505 1258 1492 1256 1477 1270 1477 1305 1488 1325 1500 1328 1530 1360 1532 1382 1543 1386",
      "c 1464 1300 1485 1340 1486 1370 1462 1370 1452 1335", "c 1428 965 1442 954 1465 970 1460 990 1445 1000 1427 988",
      "p 1194 1532 1194 1524 1188 1520 1188 1510 1207 1510 1207 1522 1203 1524 1203 1532", "p 1443 1532 1443 1512 1456 1508 1457 1515 1461 1516 1461 1532",
      "o 1487 1532 1487 1505 1505 1488 1525 1488 1530 1492 1543 1494",
    ],
  },
];

/** Turns a point list into a smooth cubic path (Catmull-Rom) in map pixels. */
function trace(sheet: Sheet, line: string): string {
  const [kind, ...nums] = line.split(" ");
  const v = nums.map(Number);
  const pts: [number, number][] = [];
  for (let i = 0; i < v.length; i += 2) pts.push([sheet.x + v[i] * sheet.sx, sheet.y + v[i + 1] * sheet.sy]);
  const f = (n: number) => n.toFixed(1);
  if (kind === "p") return "M" + pts.map((p) => `${f(p[0])} ${f(p[1])}`).join("L") + "z";
  const n = pts.length;
  const at = (i: number) => (kind === "c" ? pts[(i + n) % n] : pts[Math.max(0, Math.min(n - 1, i))]);
  let d = `M${f(pts[0][0])} ${f(pts[0][1])}`;
  for (let i = 0; i < (kind === "c" ? n : n - 1); i++) {
    const [a, b, c, e] = [at(i - 1), at(i), at(i + 1), at(i + 2)];
    const len = Math.hypot(c[0] - b[0], c[1] - b[1]);
    const h = (p: number[], q: number[]) => {
      const l = Math.hypot(q[0] - p[0], q[1] - p[1]) || 1;
      return [((q[0] - p[0]) / l) * len * 0.34, ((q[1] - p[1]) / l) * len * 0.34];
    };
    const t1 = h(a, c), t2 = h(b, e);
    d += `C${f(b[0] + t1[0])} ${f(b[1] + t1[1])} ${f(c[0] - t2[0])} ${f(c[1] - t2[1])} ${f(c[0])} ${f(c[1])}`;
  }
  return d + (kind === "c" ? "z" : "");
}
const outline = sheets.map((s) => s.lines.map((l) => trace(s, l)).join("")).join("");

/* ---------- tree data ---------- */

type Arrow = "" | "open" | "shut";
interface Node { level: number; arrow: Arrow; icon?: string; text: string; sel?: boolean }
const n = (level: number, arrow: Arrow, icon: string, text: string, sel = false): Node => ({ level, arrow, icon, text, sel });

const browser: Node[] = [
  n(0, "shut", "folder", "/Volumes"),
  n(0, "open", "star", "Favorites"),
  n(1, "shut", "folder", "/Volumes/Macintosh HD/Users/maples/Downloads"),
  n(1, "shut", "folder", "/Volumes/Macintosh HD/Users/maples/GitHub"),
  n(1, "shut", "folder", "/Volumes/Macintosh HD/Users/maples/Scratch/144"),
  n(0, "shut", "bookmark", "Spatial Bookmarks"),
  n(0, "open", "home", "Project Home"),
  n(1, "shut", "folder", "L10"),
  n(1, "open", "folderOpen", "L12"),
  n(2, "", "raster", "ChirDEM.tif", true),
  n(2, "", "vector", "elevation1000mGrid.shp"),
  n(2, "", "vector", "IDW100mContours.shp"),
  n(2, "", "raster", "IDWhillshade.tif"),
  n(2, "", "raster", "IDWsysP2_12.tif"),
  n(2, "", "vector", "NNcontours.shp"),
  n(2, "", "raster", "NNfromRandom1000.tif"),
  n(2, "", "raster", "NNhillshade.tif"),
  n(2, "", "vector", "random1000elevation.shp"),
  n(2, "", "vector", "random100points.shp"),
  n(2, "", "raster", "ReclassSlopeMajority.sdat"),
  n(2, "", "raster", "slope.tif"),
  n(2, "shut", "vector", "Strata.shp"),
  n(2, "", "vector", "SytematicGrid1000m.shp"),
  n(1, "shut", "folder", "TerrainLabData"),
  n(1, "shut", "folder", "ViewStationSHP"),
  n(1, "shut", "qgis", "interpolation"),
  n(1, "shut", "zip", "L12.zip"),
  n(1, "", "qgis", ""),
];

const toolbox: Node[] = [
  n(0, "shut", "clock", "Recently used"),
  n(0, "open", "qgis", "Vector creation"),
  n(1, "", "gear", "Raster pixels to points"),
  n(1, "", "gear", "Raster pixels to polygons"),
  n(0, "open", "qgis", "Vector geometry"),
  n(1, "", "gear", "Polygonize"),
  n(0, "open", "gdal", "GDAL"),
  n(1, "open", "", "Raster conversion"),
  n(2, "", "polygonize", "Polygonize (raster to vector)", true),
  n(0, "open", "box", "WhiteboxTools"),
  n(1, "open", "", "GIS Analysis - Overlay Tools"),
  n(2, "", "box", "Polygonize"),
];

type Tool = string | { id: string; off?: boolean; drop?: "side" | "corner"; on?: boolean };
const off = (id: string, drop?: "side" | "corner"): Tool => ({ id, off: true, drop });

const topBars: Tool[][] = [
  ["newDoc", "open", "save", "newLayout", "layoutMgr", "style"],
  ["dataSource", "geoPackage", "shape", "spatialite", "memory", "mesh", "virtual"],
  ["label", "diagram", "|", "labelPin", "labelRed", "|", off("labelPin2"), off("labelEye"), off("labelMove"), off("labelRot"), off("labelEdit")],
  ["help"],
  [off("pencils", "corner"), "pencil", off("saveEdit"), off("digitize", "side"), off("addPoly"), off("vertex", "side"), off("multiEdit"), off("trash"), off("cut"), off("copy"), off("paste"), off("undo"), off("redo")],
];

const sideBars: Tool[][] = [
  [{ id: "pan", on: true }, "panSel", "zoomIn", "zoomOut", "zoomFull", "zoomSel", "zoomLayer", off("zoomNative"), "zoomLast", off("zoomNext"), "newMap", "new3d", "newBook", "books", "clock", "refresh"],
  [{ id: "select", drop: "side" }, { id: "selForm", drop: "side" }, { id: "deselect", drop: "side" }, { id: "selLoc", drop: "side" }],
  ["identify", "abacus", { id: "gear", on: true }, "sigma", { id: "table", drop: "side" }, { id: "measure", drop: "side" }, { id: "tips", on: true }, off("action", "side")],
];

@customElement("app-root")
export class AppRoot extends LitElement {
  static styles = css`
    :host { display: block; box-sizing: border-box; width: 4336px; height: 2793px; zoom: 0.94465; overflow: hidden; background: #fff; padding: 74px 110px 0; font-family: Inter, "Liberation Sans", sans-serif; font-size: 24.4px; letter-spacing: .68px; color: #262626; white-space: nowrap; }
    * { box-sizing: border-box; }
    svg { display: block; flex: none; overflow: visible; letter-spacing: 0; }
    .i48 { width: 48px; height: 48px; }
    .i32 { width: 32px; height: 32px; }
    .off { opacity: .38; filter: grayscale(.65); }
    .window { width: 4116px; height: 2574px; border: 2.2px solid #3d3d3f; border-radius: 24px; overflow: hidden; display: flex; flex-direction: column; background: #f5f5f5; box-shadow: 0 33px 76px rgba(0, 0, 0, .42); }

    .title { height: 58px; flex: none; background: #fdfdfd; border-bottom: 2.2px solid #000; display: grid; grid-template-columns: 1fr auto 1fr; align-items: center; font-size: 26px; letter-spacing: .15px; font-weight: 700; color: #3c3c3c; }
    .lights { display: flex; gap: 16px; padding-left: 16px; }
    .light { width: 24px; height: 24px; border-radius: 50%; border: 2.2px solid #c0271c; background: #dd3024; }
    .light.mid { background: #996b22; border-color: #7d5518; }
    .light.max { background: #3b8a25; border-color: #2c6b1b; }

    .bars { flex: none; height: 75px; display: flex; }
    .bar { display: flex; align-items: center; height: 100%; border-bottom: 2.2px solid #b9b9b9; background: linear-gradient(#fdfdfd, #f4f4f4); padding: 0 6px 0 10px; margin-right: 1px; }
    .bar.rest { flex: 1; margin-right: 0; }
    .bars.second { height: 78px; }
    .grip { width: 12px; height: 36px; margin-right: 3px; background: radial-gradient(circle at 2px 2px, #bbb 1.1px, transparent 1.5px) 0 0 / 6px 6px; }
    .cell { width: 66px; height: 64px; display: flex; align-items: center; justify-content: center; position: relative; }
    .rule { width: 14px; height: 38px; display: flex; justify-content: center; }
    .rule::after { content: ""; width: 2px; background: #d4d4d4; }
    .down, .right, .up, .left { display: block; background: #5a5a5a; flex: none; }
    .down { width: 15px; height: 8px; clip-path: polygon(0 0, 100% 0, 50% 100%); }
    .up { width: 15px; height: 8px; clip-path: polygon(0 100%, 100% 100%, 50% 0); }
    .right { width: 8px; height: 15px; clip-path: polygon(0 0, 100% 50%, 0 100%); }
    .left { width: 8px; height: 15px; clip-path: polygon(100% 0, 0 50%, 100% 100%); }
    .drop { width: 24px; display: flex; justify-content: center; }
    .corner { position: absolute; right: 6px; bottom: 8px; width: 12px; height: 7px; }

    .main { flex: 1; min-height: 0; display: grid; grid-template: minmax(0, 1fr) / 101px 769px 2279px minmax(0, 1fr); }
    .side { display: flex; flex-direction: column; }
    .sbar { border-right: 2.2px solid #b9b9b9; background: linear-gradient(90deg, #fdfdfd, #f4f4f4); padding: 0 0 6px; margin-bottom: 1px; }
    .sbar.rest { flex: 1; margin: 0; }
    .sgrip { height: 26px; display: flex; justify-content: center; padding: 10px 0 0 4px; }
    .sgrip::after { content: ""; width: 36px; height: 11px; background: radial-gradient(circle at 2px 2px, #bbb 1.1px, transparent 1.5px) 0 0 / 6px 6px; }
    .sbar + .sbar .sgrip { height: 25px; }
    .scell { height: 64px; display: flex; align-items: center; padding-left: 28px; }
    .scell.two { padding-left: 16px; gap: 12px; }
    .scell.on { padding-left: 20px; }
    .pressed { width: 64px; height: 62px; border: 2.2px solid #aaa; border-radius: 6px; background: #e1e1e1; display: flex; align-items: center; justify-content: center; }

    .docks { padding: 0 14px 0 3px; display: flex; flex-direction: column; position: relative; min-height: 0; }
    .dhead { height: 40px; flex: none; display: flex; align-items: center; padding-left: 9px; font-size: 21.8px; letter-spacing: .3px; gap: 6px; }
    .dhead .name { flex: 1; }
    .dbtns { display: flex; gap: 6px; padding-right: 2px; }
    .dbtn { width: 22px; height: 22px; }
    .dtools { height: 61px; padding-bottom: 3px; flex: none; display: flex; align-items: center; padding-left: 7px; }
    .dcell { width: 50px; display: flex; justify-content: center; position: relative; }
    .dcell .tick { position: absolute; left: 32px; bottom: -3px; width: 11px; height: 6px; }
    .split { height: 13px; flex: none; display: flex; align-items: center; justify-content: center; }
    .split::after { content: ""; width: 36px; height: 4px; background: radial-gradient(circle at 2px 2px, #bbb 1.1px, transparent 1.5px) 0 0 / 6px 6px; }
    .vgrip { position: absolute; width: 4px; height: 36px; background: radial-gradient(circle at 2px 2px, #bbb 1.1px, transparent 1.5px) 0 0 / 6px 6px; right: 3px; top: 1137px; }

    .box { border: 1.1px solid #b5b5b5; background: #fff; display: grid; grid-template-columns: minmax(0, 1fr) 28px; overflow: hidden; }
    .box.browse { height: 1008px; flex: none; grid-template-rows: minmax(0, 1fr) 28px; }
    .box.layers { flex: 1; min-height: 0; grid-template-rows: minmax(0, 1fr); }
    .rows { overflow: hidden; padding-top: 1px; min-width: 0; }
    .row { height: 36px; display: flex; align-items: center; padding-left: calc(var(--lv) * 32px); }
    .row.sel, .lrow.sel, .trow.sel { background: #dbdbdb; color: #000; }
    .slot { width: 34px; display: flex; justify-content: center; flex: none; }
    .row .i32 { margin: 0 12px 0 5px; }
    .vs { border-left: 2.2px solid #bdbdbd; display: flex; flex-direction: column; background: #ebebeb; }
    .sbtn { height: 28px; flex: none; background: #fbfbfb; display: flex; align-items: center; justify-content: center; }
    .vs .sbtn:first-child { border-bottom: 2.2px solid #bdbdbd; }
    .vs .sbtn:last-child { border-top: 2.2px solid #bdbdbd; }
    .thumb { background: linear-gradient(90deg, #fff, #f4f4f4); border-bottom: 2.2px solid #bdbdbd; flex: none; }
    .space { flex: 1; }
    .hs { border-top: 1.1px solid #bdbdbd; display: flex; background: #ebebeb; }
    .hs .sbtn { width: 28px; height: 100%; }
    .hs .sbtn:first-child { border-right: 2.2px solid #bdbdbd; }
    .hs .sbtn:last-child { border-left: 2.2px solid #bdbdbd; }
    .hthumb { width: 598px; background: linear-gradient(#fff, #f4f4f4); border-right: 2.2px solid #bdbdbd; }
    .join { border-left: 2.2px solid #bdbdbd; border-top: 1.1px solid #bdbdbd; background: #f5f5f5; }

    .lrow { height: 36px; display: flex; align-items: center; padding-left: calc(var(--lv) * 40px + 47px); position: relative; font-weight: 700; letter-spacing: .85px; }
    .lrow .slot { width: 42px; margin: 0 5px 0 -47px; }
    .lrow .i32 { margin-right: 12px; }
    .lrow .under { text-decoration: underline; text-underline-offset: 3px; text-decoration-thickness: 3px; }
    .lrow.plain { font-weight: 400; letter-spacing: .68px; }
    .lrow.dim { color: #7a7a7a; font-style: italic; }
    .lrow.dim .check { color: #808080; }
    .band { height: 32px; display: flex; align-items: center; padding-left: 88px; }
    .ramp { height: 388px; display: flex; padding: 2px 0 2px 87px; }
    .grad { width: 64px; background: linear-gradient(#fff, #000); }
    .ends { display: flex; flex-direction: column; justify-content: space-between; padding: 0 0 0 13px; line-height: 32px; font-size: 25px; color: #3a3a3a; }
    .check { width: 28px; height: 28px; border: 2.2px solid #bbb; background: #fff; color: #222; margin-right: 12px; flex: none; display: flex; align-items: center; justify-content: center; }
    .check svg { width: 20px; height: 20px; }

    .canvas { margin-top: 1px; border: 1.1px solid #bbb; background: #fff; position: relative; min-height: 0; }
    .canvas svg { width: 100%; height: 100%; }
    .pin { position: absolute; left: 1510px; top: 1196px; width: 38px; height: 63px; border: 2.2px solid #000; background: #fff; color: #000; font-size: 33px; letter-spacing: 0; display: flex; align-items: center; justify-content: center; }

    .tb { padding: 0 0 0 13px; display: flex; flex-direction: column; position: relative; min-height: 0; }
    .tb .dhead { padding-left: 8px; }
    .tb .dtools { padding-left: 7px; }
    .tb .rule { width: 15px; height: 36px; }
    .tb .vgrip { left: 4px; right: auto; top: 1122px; }
    .find { height: 48px; flex: none; border: 2.2px solid #b0b0b0; border-radius: 5px 0 0 5px; border-right: 0; background: #fff; display: flex; align-items: center; padding: 0 18px 0 15px; color: #1c1c1c; font-size: 25px; letter-spacing: .5px; }
    .find .q { flex: 1; padding-left: 16px; }
    .tlist { flex: 1; min-height: 0; background: #fff; border: 1.1px solid #b5b5b5; border-top: 0; border-right: 0; padding-top: 2px; margin-bottom: 3px; }
    .trow { height: 36px; display: flex; align-items: center; padding-left: calc(var(--lv) * 40px); }
    .trow.low { height: 32px; }
    .trow .slot { width: 42px; margin-right: 5px; }
    .trow .i32 { margin-right: 13px; }
    .tabs { height: 54px; flex: none; display: flex; align-items: flex-start; }
    .tab { height: 48px; width: 207px; border: 2.2px solid #b5b5b5; border-radius: 0 0 6px 6px; background: linear-gradient(#e6e6e6, #e1e1e1); display: flex; align-items: center; justify-content: center; padding-top: 2px; }
    .tab.cur { width: 287px; height: 53px; background: #fcfcfc; border-top-color: #fcfcfc; border-left-width: 1.1px; padding-top: 4px; }
    .tail { flex: 1; height: 2.2px; background: #b9b9b9; }

    .status { height: 61px; flex: none; display: grid; align-items: center; padding-left: 10px; font-size: 21.8px; letter-spacing: .25px; grid-template-columns: 442px 1915px 121px 231px 59px 64px 210px 43px 105px 205px 105px 198px 39px 106px 36px 176px 47px; }
    .status .blk { color: #000; }
    .field { height: 44px; border: 2.2px solid #b5b5b5; border-radius: 5px; background: #fff; display: flex; align-items: center; letter-spacing: .55px; }
    .field.loc { width: 423px; color: #6e6e6e; font-size: 24px; letter-spacing: .85px; padding-left: 16px; gap: 14px; }
    .field.xy { width: 223px; justify-content: center; }
    .field.scale { width: 186px; height: 48px; padding-left: 8px; }
    .field.spin { width: 185px; padding-left: 8px; height: 46px; }
    .field .val { flex: 1; }
    .knob { align-self: stretch; width: 40px; border-left: 1.1px solid #c4c4c4; background: #f8f8f8; display: flex; flex-direction: column; align-items: center; justify-content: center; gap: 8px; border-radius: 0 4px 4px 0; }
    .spin .knob { width: 28px; }
    .knob .down, .knob .up { width: 14px; }
    .status .check { margin: 0; }
  `;

  private topTool(t: Tool) {
    if (t === "|") return html`<span class="rule"></span>`;
    const o = typeof t === "string" ? { id: t } : t;
    return html`<span class="cell">${icon24(o.id, o.off)}${o.drop === "corner" ? html`<i class="down corner"></i>` : nothing}</span>
      ${o.drop === "side" ? html`<span class="drop"><i class="down"></i></span>` : nothing}`;
  }

  private sideTool(t: Tool) {
    const o = typeof t === "string" ? { id: t } : t;
    if (o.on) return html`<div class="scell on"><span class="pressed">${icon24(o.id)}</span></div>`;
    return html`<div class="scell ${o.drop ? "two" : ""}">${icon24(o.id, o.off)}${o.drop ? html`<i class="down"></i>` : nothing}</div>`;
  }

  private dockHead(name: string) {
    return html`<div class="dhead"><span class="name">${name}</span><span class="dbtns">
      <svg class="dbtn" viewBox="0 0 22 22"><rect x="1" y="1" width="20" height="20" rx="3.5" fill="#f4f4f2" stroke="#77766f" stroke-width="1.8"/><circle cx="12.6" cy="8.6" r="4" fill="none" stroke="#77766f" stroke-width="1.7"/><rect x="5" y="9.6" width="7.6" height="7" rx="1.5" fill="#f4f4f2" stroke="#77766f" stroke-width="1.7"/></svg>
      <svg class="dbtn" viewBox="0 0 22 22"><rect x="1" y="1" width="20" height="20" rx="3.5" fill="#f4f4f2" stroke="#77766f" stroke-width="1.8"/><path d="M6 6l10 10M16 6L6 16" stroke="#66655f" stroke-width="3.6"/></svg></span></div>`;
  }

  private arrow(a: Arrow) {
    return html`<span class="slot">${a ? html`<i class=${a === "open" ? "down" : "right"}></i>` : nothing}</span>`;
  }

  private dtool(id: string, tick = false) {
    return html`<span class="dcell">${icon32(id)}${tick ? html`<i class="down tick"></i>` : nothing}</span>`;
  }

  private vbar(thumb: number) {
    return html`<div class="vs"><span class="sbtn"><i class="up"></i></span><span class="thumb" style=${styleMap({ height: `${thumb}px` })}></span><span class="space"></span><span class="sbtn"><i class="down"></i></span></div>`;
  }

  private check(on = true) {
    return html`<span class="check">${on ? html`<svg viewBox="0 0 20 20"><path d="M3.4 9.6l4.8 7L16.4 2.8" fill="none" stroke="currentColor" stroke-width="2.7"/></svg>` : nothing}</span>`;
  }

  private layer(arrow: Arrow, ico: string, text: string, cls = "", level = 0, on = true): TemplateResult {
    return html`<div class="lrow ${cls}" style=${styleMap({ "--lv": `${level}` })}>${this.arrow(arrow)}${this.check(on)}${icon32(ico)}<span class=${cls === "sel" ? "under" : ""}>${text}</span></div>`;
  }

  private ramp(band: string) {
    return html`<div class="band">${band}</div>
      <div class="ramp"><span class="grad"></span><span class="ends"><span>3</span><span>1</span></span></div>`;
  }

  private spin(value: string) {
    return html`<span class="field spin"><span class="val">${value}</span><span class="knob"><i class="up"></i><i class="down"></i></span></span>`;
  }

  render() {
    return html`
      <div class="window">
        <div class="title">
          <span class="lights"><i class="light"></i><i class="light mid"></i><i class="light max"></i></span>
          <span>*interpolation — QGIS [Earthsys 2025]</span><span></span>
        </div>
        <div class="bars">
          ${topBars.map((b, i) => html`<div class="bar ${i === 4 ? "rest" : ""}"><span class="grip"></span>${b.map((t) => this.topTool(t))}</div>`)}
        </div>
        <div class="bars second"><div class="bar rest"><span class="grip"></span><span class="cell">${icon24("csvRefresh")}</span></div></div>

        <div class="main">
          <div class="side">
            ${sideBars.map((b, i) => html`<div class="sbar ${i === 2 ? "rest" : ""}"><div class="sgrip"></div>${b.map((t) => this.sideTool(t))}</div>`)}
          </div>

          <div class="docks">
            ${this.dockHead("Browser")}
            <div class="dtools">${this.dtool("addLayer")}${this.dtool("refresh")}${this.dtool("filter")}${this.dtool("collapse")}${this.dtool("info")}</div>
            <div class="box browse">
              <div class="rows">${browser.map((r) => html`<div class="row ${r.sel ? "sel" : ""}" style=${styleMap({ "--lv": `${r.level}` })}>${this.arrow(r.arrow)}${icon32(r.icon!)}<span>${r.text}</span></div>`)}</div>
              ${this.vbar(489)}
              <div class="hs"><span class="sbtn"><i class="left"></i></span><span class="hthumb"></span><span class="space"></span><span class="sbtn"><i class="right"></i></span></div>
              <div class="join"></div>
            </div>
            <div class="split"></div>
            ${this.dockHead("Layers")}
            <div class="dtools">${this.dtool("brush")}${this.dtool("addGroup")}${this.dtool("eye", true)}${this.dtool("filter", true)}${this.dtool("epsilon")}<span class="drop"><i class="down"></i></span>${this.dtool("expand")}${this.dtool("collapse")}${this.dtool("remove")}</div>
            <div class="box layers">
              <div class="rows">
                ${this.layer("", "swatch", "Strata", "sel")}
                ${this.layer("open", "raster", "ReclassSlopeMajority")}
                ${this.ramp("Band 1")}
                ${this.layer("open", "raster", "ReclassSlope")}
                ${this.ramp("Band 1 (Gray)")}
                ${this.layer("shut", "raster", "slope")}
                ${this.layer("open", "group", "Group: Nearest Neighbor", "plain", 0, false)}
                ${this.layer("", "dot", "random1000elevation", "dim", 1)}
                ${this.layer("", "vector", "NNcontours", "dim", 1)}
              </div>
              ${this.vbar(857)}
            </div>
            <span class="vgrip"></span>
          </div>

          <div class="canvas">
            <svg viewBox="983 289 2277 2295" preserveAspectRatio="none">
              <rect x="1107.5" y="595" width="2075.5" height="1744" fill="#b6494b" stroke="#232323" stroke-width="1.8"/>
              <path d=${outline} fill="none" stroke="#232323" stroke-width="1.8"/>
            </svg>
            <span class="pin">1</span>
          </div>

          <div class="tb">
            ${this.dockHead("Processing Toolbox")}
            <div class="dtools">${this.dtool("gears", true)}${this.dtool("python", true)}${this.dtool("clock")}${this.dtool("doc")}<span class="rule"></span>${this.dtool("note")}<span class="rule"></span>${this.dtool("wrench")}</div>
            <div class="find">
              <svg width="26" height="26" viewBox="0 0 26 26"><circle cx="11" cy="10" r="8.6" fill="none" stroke="#999" stroke-width="2.2"/><path d="M17 16.6l7 7" stroke="#999" stroke-width="3"/></svg>
              <span class="q">polygonize</span>
              <svg width="26" height="20" viewBox="0 0 26 20"><path d="M7 0H26V20H7L0 10z" fill="#8f8f8f"/><path d="M10.4 5l10 10M20.4 5l-10 10" stroke="#fff" stroke-width="2"/></svg>
            </div>
            <div class="tlist">${toolbox.map((r) => html`<div class="trow ${r.sel ? "sel" : ""} ${r.icon ? "" : "low"}" style=${styleMap({ "--lv": `${r.level}` })}>${this.arrow(r.arrow)}${r.icon ? icon32(r.icon) : nothing}<span>${r.text}</span></div>`)}</div>
            <div class="tabs"><span class="tab">Layer Styling</span><span class="tab cur">Processing Toolbox</span><span class="tail"></span></div>
            <span class="vgrip"></span>
          </div>
        </div>

        <div class="status">
          <span class="field loc"><svg width="26" height="26" viewBox="0 0 26 26"><circle cx="11" cy="10" r="8" fill="none" stroke="#999" stroke-width="2.2"/><path d="M17 16l6.6 7" stroke="#999" stroke-width="3"/></svg>Type to locate (⌘K)</span>
          <span class="blk">1 legend entry removed.</span>
          <span>Coordinate</span>
          <span class="field xy">676775,3510414</span>
          <svg width="33" height="33" viewBox="0 0 33 33"><path d="M5 3q5-3 8 3l5 10q5 6 8 8 2 5-4 7-6-1-8-6Q6 20 5 14 2 8 5 3z" fill="#fff" stroke="#222" stroke-width="2.4"/><path d="M6 6l10 14M12 6L6 14M9 18l9-6M15 26l8-6" stroke="#222" stroke-width="2.6"/><circle cx="20" cy="25" r="2.6" fill="#222"/><path d="M1 21h3M24 3l4 1M20 8l5-1" stroke="#222" stroke-width="2"/></svg>
          <span class="blk">Scale</span>
          <span class="field scale"><span class="val">1:77308</span><span class="knob"><i class="down"></i></span></span>
          <svg width="24" height="30" viewBox="0 0 24 30"><path d="M5 15V9q0-7 7-7t7 7v6" fill="none" stroke="#888" stroke-width="3.2"/><rect x="0" y="14" width="24" height="16" rx="2" fill="#666"/></svg>
          <span class="blk">Magnifier</span>
          ${this.spin("100%")}
          <span>Rotation</span>
          ${this.spin("0.0 °")}
          ${this.check()}
          <span>Render</span>
          <svg width="31" height="28" viewBox="0 0 31 28"><path d="M1 11Q7 1 15.5 1T30 11Q22 27 15.5 27T1 11z" fill="#8a8a8a" stroke="#666" stroke-width="1"/><path d="M1.6 11h28M5 17h21M6 6h19M15.5 1v26M9 3q-3 9 3 23M22 3q3 9-3 23" stroke="#f5f5f5" stroke-width="1.3" fill="none"/></svg>
          <span class="blk">EPSG:26912</span>
          <svg width="32" height="30" viewBox="0 0 32 30"><path d="M16 1C25 1 31 6 31 13q0 5-4 8l3 8-9-4.6Q18 25 16 25 1 24 1 13 1 1 16 1z" fill="#5c5c5c"/><circle cx="9" cy="13" r="2" fill="#fff"/><circle cx="16" cy="13" r="2" fill="#fff"/><circle cx="23" cy="13" r="2" fill="#fff"/></svg>
        </div>
      </div>`;
  }
}
